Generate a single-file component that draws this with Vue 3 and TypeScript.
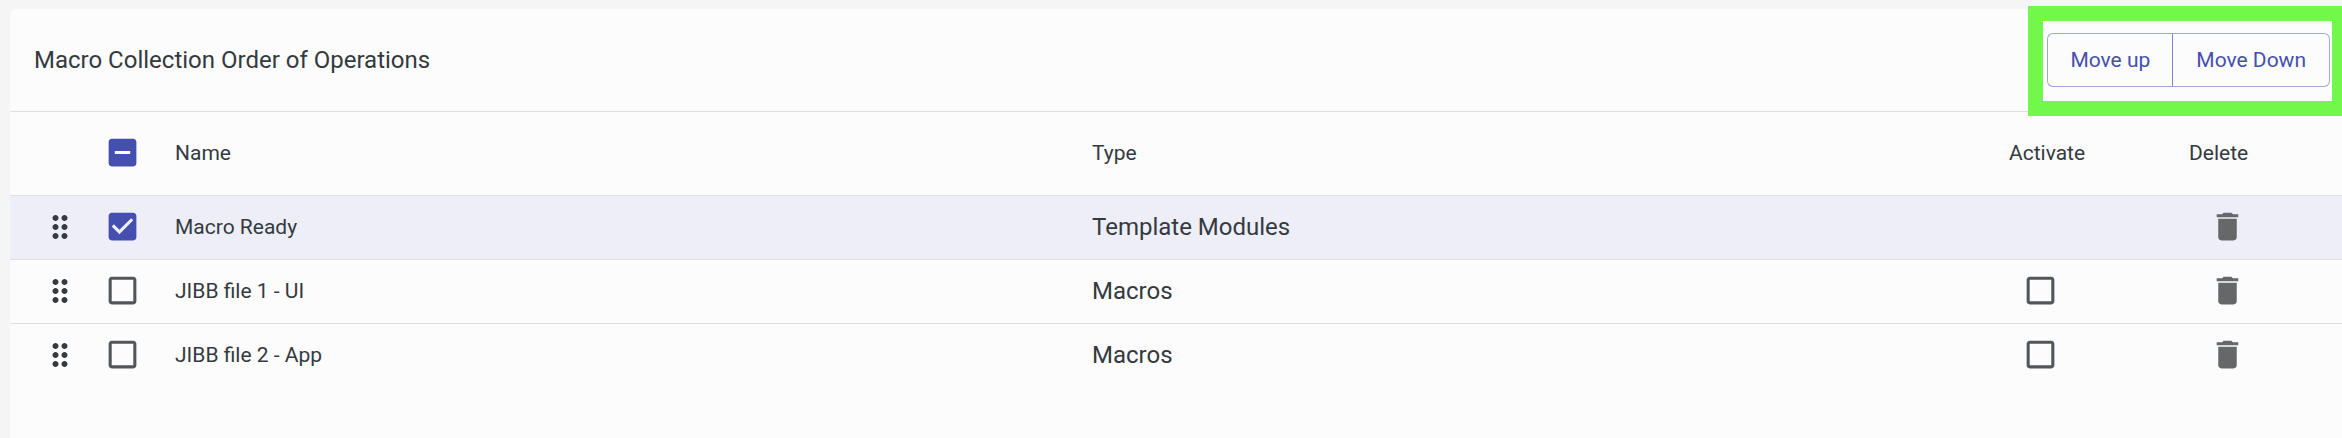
<script setup lang="ts">
import { computed, ref } from 'vue'

interface MacroItem {
  id: number
  name: string
  type: string
  selected: boolean
  active: boolean | null
}

const items = ref<MacroItem[]>([
  { id: 1, name: 'Macro Ready', type: 'Template Modules', selected: true, active: null },
  { id: 2, name: 'JIBB file 1 - UI', type: 'Macros', selected: false, active: false },
  { id: 3, name: 'JIBB file 2 - App', type: 'Macros', selected: false, active: false },
])

const icons = {
  on: 'M19 3H5c-1.11 0-2 .9-2 2v14c0 1.1.89 2 2 2h14c1.11 0 2-.9 2-2V5c0-1.1-.89-2-2-2zm-9 14l-5-5 1.41-1.41L10 14.17l7.59-7.59L19 8l-9 9z',
  off: 'M19 5v14H5V5h14m0-2H5c-1.1 0-2 .9-2 2v14c0 1.1.9 2 2 2h14c1.1 0 2-.9 2-2V5c0-1.1-.9-2-2-2z',
  mixed: 'M19 3H5c-1.1 0-2 .9-2 2v14c0 1.1.9 2 2 2h14c1.1 0 2-.9 2-2V5c0-1.1-.9-2-2-2zm-2 10H7v-2h10v2z',
  drag: 'M11 18c0 1.1-.9 2-2 2s-2-.9-2-2 .9-2 2-2 2 .9 2 2zm-2-8c-1.1 0-2 .9-2 2s.9 2 2 2 2-.9 2-2-.9-2-2-2zm0-6c-1.1 0-2 .9-2 2s.9 2 2 2 2-.9 2-2-.9-2-2-2zm6 4c1.1 0 2-.9 2-2s-.9-2-2-2-2 .9-2 2 .9 2 2 2zm0 2c-1.1 0-2 .9-2 2s.9 2 2 2 2-.9 2-2-.9-2-2-2zm0 6c-1.1 0-2 .9-2 2s.9 2 2 2 2-.9 2-2-.9-2-2-2z',
  trash: 'M6 19c0 1.1.9 2 2 2h8c1.1 0 2-.9 2-2V7H6v12zM19 4h-3.5l-1-1h-5l-1 1H5v2h14V4z',
}

const allSelected = computed(() => items.value.length > 0 && items.value.every((i) => i.selected))
const someSelected = computed(() => items.value.some((i) => i.selected) && !allSelected.value)
const headIcon = computed(() => (allSelected.value ? icons.on : someSelected.value ? icons.mixed : icons.off))

function toggleAll() {
  const next = !allSelected.value
  items.value.forEach((i) => (i.selected = next))
}

function remove(id: number) {
  items.value = items.value.filter((i) => i.id !== id)
}

function move(step: -1 | 1) {
  const list = [...items.value]
  const order = list.map((_, i) => i)
  if (step === 1) order.reverse()
  for (const i of order) {
    const j = i + step
    if (list[i].selected && list[j] && !list[j].selected) {
      ;[list[i], list[j]] = [list[j], list[i]]
    }
  }
  items.value = list
}
</script>

<template>
  <main class="page">
    <section class="card">
      <header class="toolbar">
        <h1 class="title">Macro Collection Order of Operations</h1>
        <div class="group">
          <button type="button" class="move" @click="move(-1)">Move up</button>
          <button type="button" class="move" @click="move(1)">Move Down</button>
        </div>
        <div class="highlight" aria-hidden="true"></div>
      </header>
      <table class="table">
        <colgroup>
          <col class="col-drag" />
          <col class="col-check" />
          <col />
          <col />
          <col class="col-active" />
          <col class="col-delete" />
        </colgroup>
        <thead>
          <tr>
            <td></td>
            <th scope="col">
              <label class="check" :class="{ filled: allSelected || someSelected }">
                <input type="checkbox" aria-label="Select all" :checked="allSelected" :indeterminate="someSelected" @change="toggleAll" />
                <svg viewBox="0 0 24 24"><path :d="headIcon" /></svg>
              </label>
            </th>
            <th scope="col">Name</th>
            <th scope="col">Type</th>
            <th scope="col">Activate</th>
            <th scope="col">Delete</th>
          </tr>
        </thead>
        <tbody>
          <tr v-for="item in items" :key="item.id" :class="{ selected: item.selected }">
            <td class="drag">
              <svg class="icon-drag" viewBox="0 0 24 24"><path :d="icons.drag" /></svg>
            </td>
            <td>
              <label class="check" :class="{ filled: item.selected }">
                <input v-model="item.selected" type="checkbox" :aria-label="`Select ${item.name}`" />
                <svg viewBox="0 0 24 24"><path :d="item.selected ? icons.on : icons.off" /></svg>
              </label>
            </td>
            <td>{{ item.name }}</td>
            <td class="type">{{ item.type }}</td>
            <td class="active">
              <label v-if="item.active !== null" class="check" :class="{ filled: item.active }">
                <input v-model="item.active" type="checkbox" :aria-label="`Activate ${item.name}`" />
                <svg viewBox="0 0 24 24"><path :d="item.active ? icons.on : icons.off" /></svg>
              </label>
            </td>
            <td class="delete">
              <button type="button" class="trash" :aria-label="`Delete ${item.name}`" @click="remove(item.id)">
                <svg viewBox="0 0 24 24"><path :d="icons.trash" /></svg>
              </button>
            </td>
          </tr>
        </tbody>
      </table>
    </section>
  </main>
</template>

<style>
body {
  margin: 0;
  background: #f5f5f5;
}
</style>

<style scoped>
.page {
  box-sizing: border-box;
  display: flex;
  min-height: 100vh;
  padding: 9px 0 0 10px;
  overflow: hidden;
  font-family: Roboto, 'Liberation Sans', sans-serif;
  font-size: 21px;
  line-height: 30px;
  color: #343a40;
}

.card {
  flex: 1;
  min-width: 0;
  background: #fcfcfc;
  border-top-left-radius: 6px;
}

.toolbar {
  position: relative;
  display: flex;
  align-items: center;
  justify-content: space-between;
  padding: 24px 12px 24px 24px;
  border-bottom: 1px solid #dedfe0;
}

.title {
  margin: 0;
  font-size: 24px;
  font-weight: 400;
}

.group {
  display: flex;
}

.move {
  box-sizing: border-box;
  height: 54px;
  padding: 0 23px;
  border: 1px solid #a0a6dc;
  background: transparent;
  color: #444fb0;
  font: inherit;
  cursor: pointer;
}

.move:first-child {
  padding: 0 22px;
  border-right-color: #7f87cf;
  border-radius: 6px 0 0 6px;
}

.move:last-child {
  border-left: 0;
  border-radius: 0 6px 6px 0;
}

.highlight {
  position: absolute;
  top: -3px;
  right: -5px;
  bottom: -5px;
  box-sizing: border-box;
  width: 319px;
  border: 15px solid #72f84b;
  pointer-events: none;
}

.table {
  width: 100%;
  table-layout: fixed;
  border-collapse: separate;
  border-spacing: 0;
}

.col-drag {
  width: 80px;
}

.col-check {
  width: 85px;
}

.col-active {
  width: 180px;
}

.col-delete {
  width: 153px;
}

th,
td {
  height: 61px;
  padding: 0 0 2px;
  border-bottom: 1px solid #dedfe0;
  font-weight: 400;
  text-align: left;
  vertical-align: middle;
}

thead th,
thead td {
  height: 81px;
}

tbody tr:last-child td {
  border-bottom: 0;
}

.selected td {
  background: #eeeef8;
}

.type {
  font-size: 24px;
}

.drag {
  padding-left: 32px;
}

.active {
  padding-left: 13px;
}

.delete {
  padding-left: 20px;
}

svg {
  display: block;
  width: 37px;
  height: 37px;
  fill: currentColor;
}

.icon-drag {
  width: 36px;
  height: 36px;
}

.check {
  display: grid;
  width: 37px;
  margin-left: 14px;
  color: #50565b;
  cursor: pointer;
}

.active .check {
  margin-left: 0;
}

.check.filled {
  color: #444fb0;
}

.check > * {
  grid-area: 1 / 1;
}

.check input {
  width: 37px;
  height: 37px;
  margin: 0;
  opacity: 0;
  cursor: pointer;
}

.check svg {
  pointer-events: none;
}

.trash {
  display: block;
  padding: 0;
  border: 0;
  background: transparent;
  color: #666768;
  cursor: pointer;
}
</style>
